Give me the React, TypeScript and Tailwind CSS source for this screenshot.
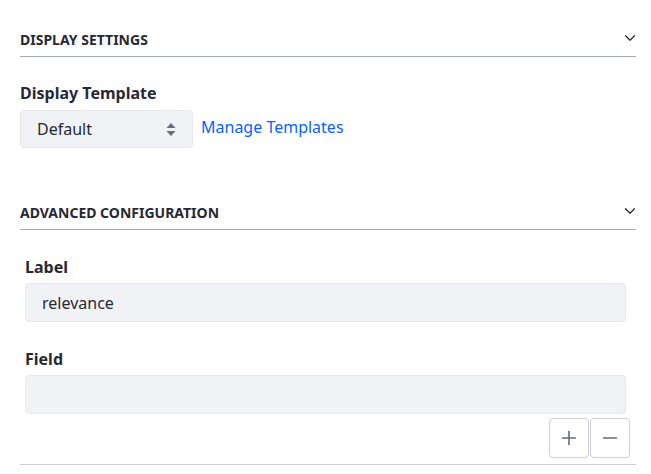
import { ChevronDown, Minus, Plus } from "lucide-react";

const font = { fontFamily: '"Noto Sans", "Open Sans", sans-serif' };

function SectionHeader({ title }: { title: string }) {
  return (
    <div className="flex items-center justify-between border-b border-[#a7a9bc] pb-[6px]">
      <span className="text-[14px] leading-5 font-bold uppercase text-[#272833]">{title}</span>
      <ChevronDown className="w-[18px] h-[18px] text-[#272833] mr-[-3px] -mt-[4px]" strokeWidth={1.6} />
    </div>
  );
}

function Field({ label, value }: { label: string; value?: string }) {
  return (
    <div>
      <div className="text-[16px] leading-6 font-bold text-[#272833] mb-[4px]">{label}</div>
      <div className="h-[39px] rounded-[4px] border border-[#e7e7ed] bg-[#f1f2f5] px-4 flex items-center text-[16px] text-[#272833]">
        {value}
      </div>
    </div>
  );
}

export default function App() {
  return (
    <div className="w-[651px] h-[474px] bg-white pl-5 pr-[15px] pt-[30px] overflow-hidden" style={font}>
      {/* Display settings */}
      <SectionHeader title="Display Settings" />

      <div className="mt-[24px]">
        <div className="text-[16px] leading-6 font-bold text-[#272833] mb-[5px]">Display Template</div>
        <div className="flex items-center gap-2">
          <div className="w-[173px] h-[38px] rounded-[4px] border border-[#e7e7ed] bg-[#f1f2f5] pl-4 pr-4 flex items-center justify-between text-[16px] text-[#272833]">
            <span>Default</span>
            <svg width="10" height="16" viewBox="0 0 10 16" className="text-[#6b6c7e]">
              <path d="M5 2 L9.5 7 H0.5 Z" fill="currentColor" />
              <path d="M5 15 L9.5 10 H0.5 Z" fill="currentColor" />
            </svg>
          </div>
          <a className="text-[16px] text-[#0b5fff] -mt-[4px]">Manage Templates</a>
        </div>
      </div>

      {/* Advanced configuration */}
      <div className="mt-[55px]">
        <SectionHeader title="Advanced Configuration" />
      </div>

      <div className="pl-[5px] pr-[10px] mt-[25px] flex flex-col gap-[25px]">
        <Field label="Label" value="relevance" />
        <Field label="Field" />
      </div>

      <div className="flex justify-end gap-px mt-[4px] pr-[6px]">
        <button className="w-[40px] h-[40px] rounded-[4px] border border-[#cdced9] flex items-center justify-center text-[#6b6c7e]">
          <Plus className="w-[22px] h-[22px]" strokeWidth={1.8} />
        </button>
        <button className="w-[40px] h-[40px] rounded-[4px] border border-[#cdced9] flex items-center justify-center text-[#6b6c7e]">
          <Minus className="w-[22px] h-[22px]" strokeWidth={1.8} />
        </button>
      </div>
      <div className="mt-[6px] border-b border-[#cdced9]" />
    </div>
  );
}
